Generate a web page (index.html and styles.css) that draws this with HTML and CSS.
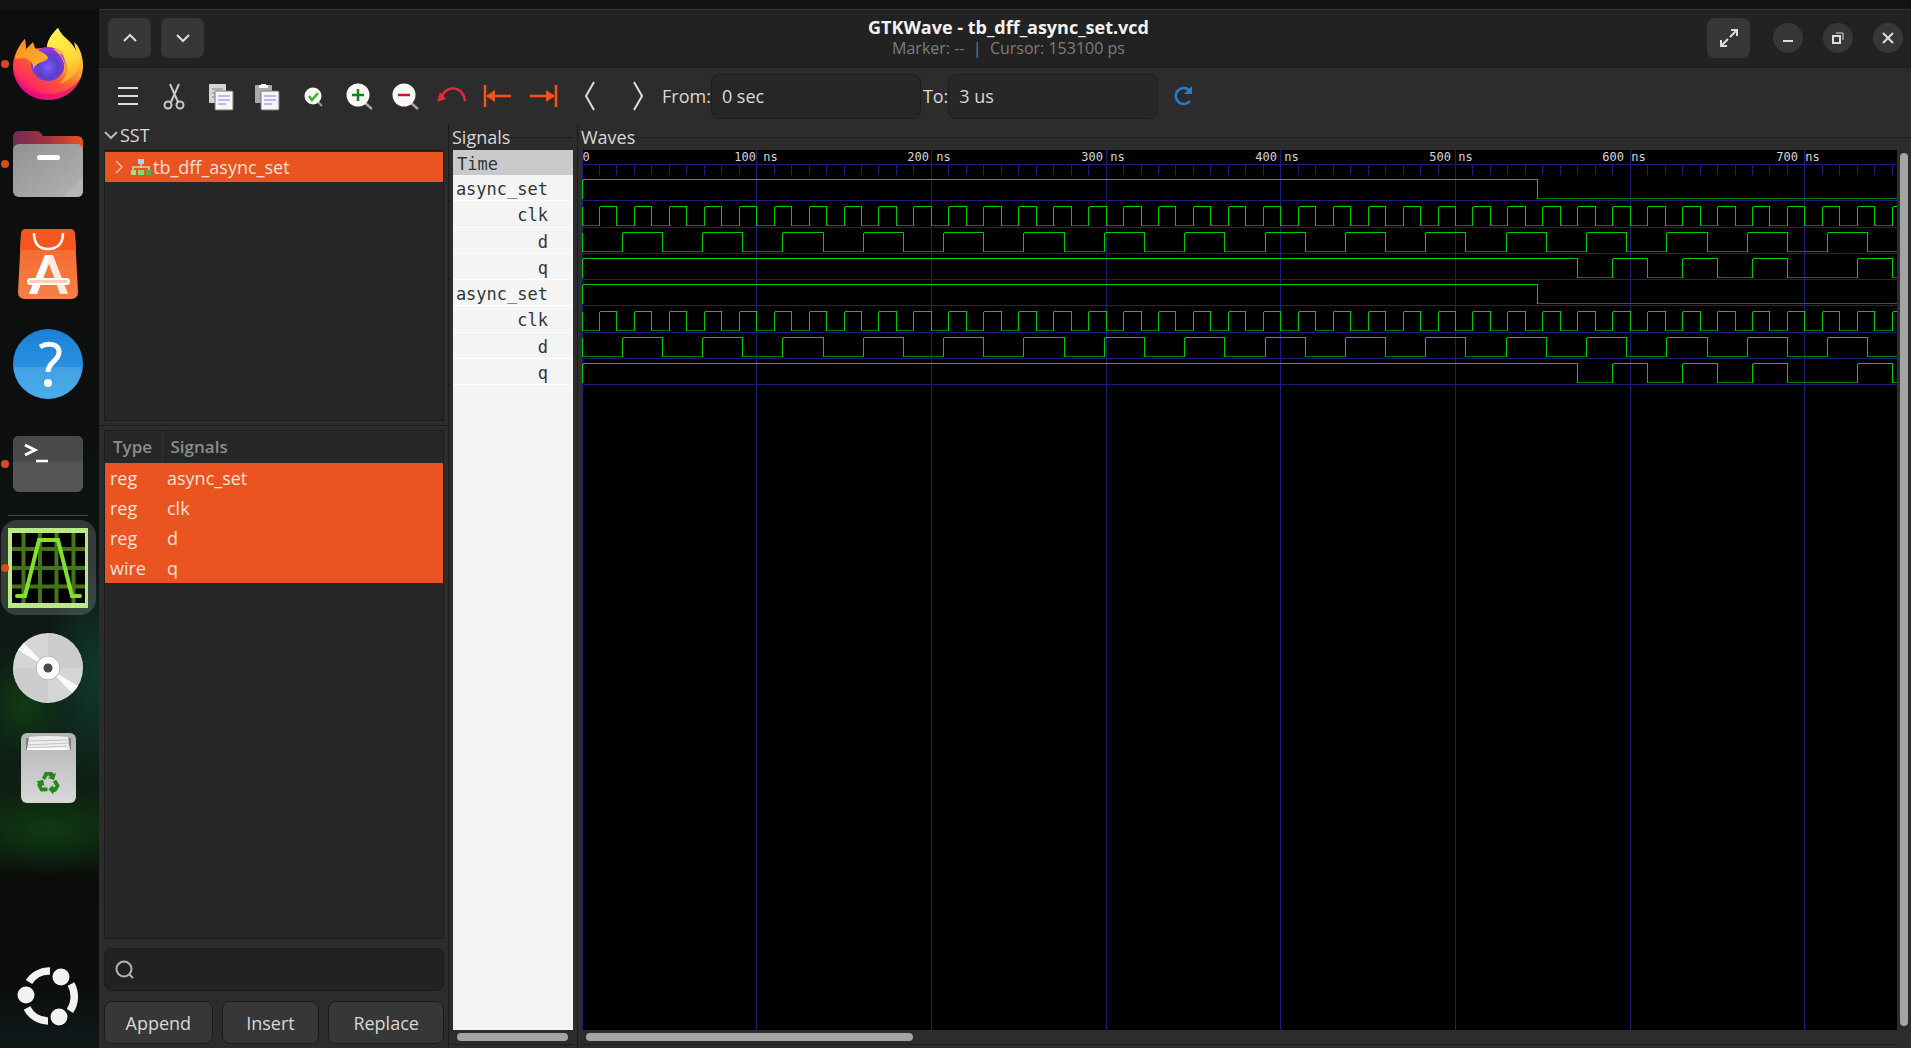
FILE: index.html
```html
<!DOCTYPE html>
<html lang="en">
<head>
<meta charset="utf-8">
<title>GTKWave - tb_dff_async_set.vcd</title>
<link rel="stylesheet" href="styles.css">
</head>
<body>
<div class="topbar"></div>
<div class="desktop">
  <nav class="dock" aria-label="Dock">
    <button class="dock-item running" aria-label="Firefox">
      <svg width="72" height="74" viewBox="0 0 72 74">
        <defs>
          <linearGradient id="fxBody" x1="0.85" y1="0.1" x2="0.25" y2="0.95"><stop offset="0" stop-color="#fff04a"/><stop offset=".3" stop-color="#ffb02c"/><stop offset=".6" stop-color="#ff5a36"/><stop offset=".85" stop-color="#ff2f5b"/><stop offset="1" stop-color="#e5097f"/></linearGradient>
          <linearGradient id="fxFlame" x1=".4" y1="0" x2=".7" y2="1"><stop offset="0" stop-color="#fff44f"/><stop offset=".6" stop-color="#ffd83a"/><stop offset="1" stop-color="#ff9a2a"/></linearGradient>
          <radialGradient id="fxGlobe" cx=".5" cy=".6" r=".6"><stop offset="0" stop-color="#7f5cff"/><stop offset=".5" stop-color="#5a3fc8"/><stop offset="1" stop-color="#a335dc"/></radialGradient>
          <linearGradient id="fxHead" x1="0" y1="0" x2="1" y2="1"><stop offset="0" stop-color="#ff8a1e"/><stop offset="1" stop-color="#ffb52e"/></linearGradient>
        </defs>
        <path d="M46 1C39 8 35 14 35 21L14 22 13 12C6 20 1 29 1 39 1 58 17 73 36 73S71 58 71 39C71 30 68 20 62 15L65 26C61 14 50 11 46 1Z" fill="url(#fxBody)"/>
        <path d="M46 1C39 8 35 14 35 21 43 20 50 24 52 30 58 38 56 50 47 57 60 53 68 44 68 32 67 24 63 20 62 15L65 26C61 14 50 11 46 1Z" fill="url(#fxFlame)"/>
        <circle cx="36" cy="37" r="17" fill="url(#fxGlobe)"/>
        <path d="M41 22C50 22 53 28 53 28L48 27C57 38 53 49 45 54 55 47 56 32 41 22Z" fill="#ffb52e"/>
        <path d="M13 12L14 22 21 15 23 21C29 26 36 27 36 31 35 35 25 34 21 42 22 36 19 34 12 31L3 32C4 24 8 17 13 12Z" fill="url(#fxHead)"/>
        <path d="M1 39C3 57 18 67 36 67 51 67 63 60 69 50 64 64 52 73 36 73 16 73 1 58 1 39Z" fill="#e5097f" opacity=".65"/>
      </svg>
    </button>
    <button class="dock-item running" aria-label="Files">
      <svg width="70" height="66" viewBox="0 0 70 66">
        <defs><linearGradient id="flBack" x1="0" x2="1"><stop offset="0" stop-color="#772953"/><stop offset=".5" stop-color="#a03340"/><stop offset="1" stop-color="#e95420"/></linearGradient>
        <linearGradient id="flFront" x1="0" y1="0" x2="1" y2="1"><stop offset="0" stop-color="#929292"/><stop offset="1" stop-color="#b2b2b2"/></linearGradient></defs>
        <path d="M0 6Q0 0 6 0H24Q27 0 30 5H64Q70 5 70 11V25H0Z" fill="url(#flBack)"/>
        <rect y="13" width="70" height="53" rx="6" fill="url(#flFront)"/>
        <path d="M50 66L70 46V60Q70 66 64 66Z" fill="#bbb" opacity=".6"/>
        <rect x="24" y="24" width="23" height="5" rx="2.5" fill="#fff"/>
      </svg>
    </button>
    <button class="dock-item" aria-label="App Center">
      <svg width="62" height="70" viewBox="0 0 62 70">
        <defs><linearGradient id="acBag" x1="0" y1="0" x2="0" y2="1"><stop offset="0" stop-color="#f4642a"/><stop offset="1" stop-color="#f58046"/></linearGradient></defs>
        <path d="M9 0H53Q58 0 58 6L61 63Q61 70 54 70H8Q1 70 1 63L4 6Q4 0 9 0Z" fill="url(#acBag)"/>
        <path d="M9 0H53Q58 0 58 6L59 21H3L4 6Q4 0 9 0Z" fill="#f3571d"/>
        <path d="M17 4C17 15 22 20 31 20S46 15 46 4" fill="none" stroke="#fff" stroke-width="2.500"/>
        <path d="M28 26H36L51 65H43L32 35 20 65H12Z" fill="#ffe9e0"/><path d="M28 26H33L20 65H12Z" fill="#fff"/>
        <rect x="11" y="50" width="41" height="5" rx="2.500" fill="#ffcdb9" stroke="#fff" stroke-width="2"/>
      </svg>
    </button>
    <button class="dock-item" aria-label="Help">
      <svg width="70" height="70" viewBox="0 0 70 70">
        <defs><linearGradient id="hpTop" x1="0" y1="0" x2="0" y2="1"><stop offset="0" stop-color="#1c7fd8"/><stop offset=".54" stop-color="#2a90de"/><stop offset=".55" stop-color="#41a0e2"/><stop offset="1" stop-color="#4aaeea"/></linearGradient></defs>
        <circle cx="35" cy="35" r="35" fill="url(#hpTop)"/>
        <path d="M27 18C35 13 46 15 46 23 46 32 35 33 35 43" fill="none" stroke="#fff" stroke-width="5"/><circle cx="35" cy="54" r="4" fill="#fff"/>
      </svg>
    </button>
    <button class="dock-item running" aria-label="Terminal">
      <svg width="70" height="56" viewBox="0 0 70 56">
        <rect width="70" height="56" rx="6" fill="#555"/><path d="M0 26V6Q0 0 6 0H64Q70 0 70 6V26Z" fill="#4a4a4a"/>
        <path d="M12 9L22 14 12 19" fill="none" stroke="#fff" stroke-width="3"/><path d="M23 25H35" stroke="#fff" stroke-width="2.500"/>
      </svg>
    </button>
    <hr class="dock-sep">
    <button class="dock-item running active" aria-label="GTKWave">
      <svg width="80" height="80" viewBox="0 0 80 80">
        <rect width="80" height="80" fill="#b9ea86"/><rect x="4" y="5" width="73" height="70" fill="#000"/>
        <path d="M15.500 5V75M32 5V75M48.500 5V75M65.500 5V75M4 21H77M4 40H77M4 58.500H77" stroke="#45731c" stroke-width="4"/>
        <path d="M9 68H17L31 12H50L64 68H72" fill="none" stroke="#84e02f" stroke-width="4" stroke-linecap="round"/>
      </svg>
    </button>
    <button class="dock-item" aria-label="Disc">
      <svg width="70" height="70" viewBox="0 0 70 70">
        <circle cx="35" cy="35" r="35" fill="#d6d6d6"/>
        <path d="M35 35V0A35 35 0 0 1 70 35ZM35 35V70A35 35 0 0 1 0 35Z" fill="#cdcdcd"/>
        <path d="M35 35L5 17 11 10ZM35 35L65 53 59 60Z" fill="#fafafa"/>
        <circle cx="35" cy="35" r="12" fill="#fafafa" stroke="#b9b4a6"/><circle cx="35" cy="35" r="4.500" fill="#4a4a4a"/>
      </svg>
    </button>
    <button class="dock-item" aria-label="Trash">
      <svg width="55" height="70" viewBox="0 0 55 70">
        <defs><linearGradient id="trBox" x1="0" y1="0" x2="0" y2="1"><stop offset="0" stop-color="#b4b4b4"/><stop offset="1" stop-color="#d8d8d8"/></linearGradient></defs>
        <rect width="55" height="70" rx="6" fill="url(#trBox)"/>
        <path d="M5 5H50V17H5Z" fill="#7d7d7d"/><path d="M8 4Q27 2 47 4L49 17H6Z" fill="#eee"/><path d="M8 8L46 7M7 12L48 10M6 15L46 13" stroke="#c4c4c4"/>
        <path d="M6 15H45L46 17H6Z" fill="#fff"/>
        <g fill="#26861d"><path id="recycle" d="M21 45L24 39H31L33 41 35 40 33 47 27 45 29 44 27 42 24 47Z"/><use href="#recycle" transform="rotate(120 27.500 50)"/><use href="#recycle" transform="rotate(240 27.500 50)"/></g>
      </svg>
    </button>
    <button class="dock-item show-apps" aria-label="Show Apps">
      <svg width="62" height="62" viewBox="0 0 62 62">
        <g fill="none" stroke="#f2f2f2" stroke-width="7.500"><path d="M12 17A24 24 0 0 1 33 6"/><path d="M54 19A26 26 0 0 1 53 46"/><path d="M10 43A24 24 0 0 0 31 56"/></g>
        <g fill="#f2f2f2" stroke="#0c0d0d" stroke-width="2"><circle cx="9" cy="30" r="9.500"/><circle cx="44" cy="12" r="9.500"/><circle cx="42" cy="52" r="9.500"/></g>
      </svg>
    </button>
  </nav>

  <main class="window">
    <header class="titlebar">
      <div class="title-side">
        <button class="head-btn" aria-label="Previous"><svg width="16" height="16" viewBox="0 0 16 16"><path d="M2 11L8 5 14 11"/></svg></button>
        <button class="head-btn" aria-label="Next"><svg width="16" height="16" viewBox="0 0 16 16"><path d="M2 5L8 11 14 5"/></svg></button>
      </div>
      <div class="title-text">
        <h1>GTKWave - tb_dff_async_set.vcd</h1>
        <p>Marker: --&nbsp; |&nbsp; Cursor: 153100 ps</p>
      </div>
      <div class="title-side title-right">
        <button class="head-btn" aria-label="Full screen"><svg width="20" height="20" viewBox="0 0 20 20"><path d="M12 2H18V8M18 2L11 9M8 18H2V12M2 18L9 11"/></svg></button>
        <div class="win-ctl">
          <button class="round-btn" aria-label="Minimize"><svg width="14" height="14" viewBox="0 0 14 14"><path d="M2 10H12"/></svg></button>
          <button class="round-btn" aria-label="Restore"><svg width="14" height="14" viewBox="0 0 14 14"><path d="M2 5H9V12H2Z"/><path d="M5 2H12V9" stroke-width="1"/></svg></button>
          <button class="round-btn" aria-label="Close"><svg width="14" height="14" viewBox="0 0 14 14"><path d="M2 2L12 12M12 2L2 12"/></svg></button>
        </div>
      </div>
    </header>

    <div class="toolbar">
      <button class="tool" aria-label="Menu"><svg width="30" height="30" viewBox="0 0 30 30"><path d="M4 7H24M4 15H24M4 23H24" fill="none" stroke="#ddd" stroke-width="2"/></svg></button>
      <button class="tool" aria-label="Cut"><svg width="30" height="30" viewBox="0 0 30 30"><g fill="none" stroke="#c9c9c9" stroke-width="2"><path d="M10 3L18 21M19 3L11 21"/><ellipse cx="8" cy="24" rx="3.500" ry="3.500"/><ellipse cx="20" cy="24" rx="3.500" ry="3.500"/></g></svg></button>
      <button class="tool" aria-label="Copy"><svg width="30" height="30" viewBox="0 0 30 30"><rect x="3" y="3" width="17" height="19" rx="1" fill="#d5d5d5"/><path d="M6 8H17M6 12H10M6 16H10" stroke="#888"/><rect x="9" y="10" width="18" height="19" rx="1" fill="#f6f6f6" stroke="#777"/><path d="M12 15H24M12 19H24M12 23H20" stroke="#a6a6ee" stroke-width="1.500"/></svg></button>
      <button class="tool" aria-label="Paste"><svg width="30" height="30" viewBox="0 0 30 30"><rect x="3" y="4" width="17" height="18" rx="1" fill="#a9a9a9"/><path d="M7 7V4H9V3H14V4H16V7Z" fill="#f3f3f3"/><rect x="9" y="10" width="18" height="19" rx="1" fill="#f6f6f6" stroke="#777"/><path d="M12 15H24M12 19H24M12 23H20" stroke="#a6a6ee" stroke-width="1.500"/></svg></button>
      <button class="tool" aria-label="Zoom to fit"><svg width="30" height="30" viewBox="0 0 30 30"><path d="M20 21L24 25" stroke="#9c9788" stroke-width="2"/><circle cx="15" cy="15" r="8.500" fill="#f7f7f4"/><path d="M11 15L14 19 20 12" fill="none" stroke="#48ae28" stroke-width="2.500"/></svg></button>
      <button class="tool" aria-label="Zoom in"><svg width="30" height="30" viewBox="0 0 30 30"><path d="M21 22L28 28" stroke="#aaa596" stroke-width="2.500"/><circle cx="14" cy="14" r="11.500" fill="#f9f9f7"/><path d="M8 14H20M14 8V20" stroke="#0d8620" stroke-width="2.500"/></svg></button>
      <button class="tool" aria-label="Zoom out"><svg width="30" height="30" viewBox="0 0 30 30"><path d="M21 22L28 28" stroke="#aaa596" stroke-width="2.500"/><circle cx="14" cy="14" r="11.500" fill="#f9f9f7"/><path d="M8 14H20" stroke="#cc1531" stroke-width="2.500"/></svg></button>
      <button class="tool" aria-label="Undo zoom"><svg width="30" height="30" viewBox="0 0 30 30"><path d="M5 18C8 4 27 3 29 20" fill="none" stroke="#e8273f" stroke-width="2.500"/><path d="M1 21L4 11 10 18Z" fill="#e8273f"/></svg></button>
      <button class="tool" aria-label="Go to start"><svg width="30" height="30" viewBox="0 0 30 30"><path d="M3 4V26M5 15H29" stroke="#f9501a" stroke-width="2.500"/><path d="M4 15L13 9V21Z" fill="#f9501a"/></svg></button>
      <button class="tool" aria-label="Go to end"><svg width="30" height="30" viewBox="0 0 30 30"><path d="M28 4V26M2 15H26" stroke="#f9501a" stroke-width="2.500"/><path d="M27 15L18 9V21Z" fill="#f9501a"/></svg></button>
      <button class="tool" aria-label="Previous edge"><svg width="30" height="30" viewBox="0 0 30 30"><path d="M20 1L12 15 20 29" fill="none" stroke="#ddd" stroke-width="2"/></svg></button>
      <button class="tool" aria-label="Next edge"><svg width="30" height="30" viewBox="0 0 30 30"><path d="M14 1L22 15 14 29" fill="none" stroke="#ddd" stroke-width="2"/></svg></button>
      <label class="range">From:<input type="text" value="0 sec"></label>
      <label class="range">To:<input type="text" value="3 us"></label>
      <button class="tool" aria-label="Reload"><svg width="30" height="30" viewBox="0 0 30 30"><path d="M24 20A8 8 0 1 1 23 9" fill="none" stroke="#2080d4" stroke-width="2.500"/><path d="M26 5V13H18Z" fill="#2080d4"/></svg></button>
    </div>

    <div class="panes">
      <section class="sst">
        <button class="expander"><svg width="14" height="14" viewBox="0 0 14 14"><path d="M1 4L7 10 13 4"/></svg>SST</button>
        <div class="tree">
          <div class="tree-row">
            <svg width="10" height="14" viewBox="0 0 10 14"><path d="M2 1L8 7 2 13" fill="none" stroke="#f8b79f" stroke-width="1.500"/></svg>
            <svg width="22" height="18" viewBox="0 0 22 18"><path d="M11 6V10M3 12V9H19V12" fill="none" stroke="#d8d0ae" stroke-width="1.500"/><rect x="8" y="1" width="6" height="5" fill="#a9d2fb"/><rect x="1" y="12" width="5" height="5" fill="#a2dc92"/><rect x="8" y="12" width="6" height="5" fill="#8ed67a"/><rect x="16" y="12" width="5" height="5" fill="#4fb34c"/></svg>
            <span>tb_dff_async_set</span>
          </div>
        </div>
        <div class="split-h"></div>
        <div class="sig-list">
          <table>
            <thead><tr><th class="col-type">Type</th><th>Signals</th></tr></thead>
            <tbody>
              <tr><td>reg</td><td>async_set</td></tr>
              <tr><td>reg</td><td>clk</td></tr>
              <tr><td>reg</td><td>d</td></tr>
              <tr><td>wire</td><td>q</td></tr>
            </tbody>
          </table>
        </div>
        <label class="search"><svg width="20" height="20" viewBox="0 0 20 20"><circle cx="9" cy="9" r="7.500"/><path d="M14 14L18 18"/></svg><input type="search" aria-label="Filter signals"></label>
        <div class="actions"><button>Append</button><button>Insert</button><button>Replace</button></div>
      </section>

      <section class="names">
        <h2 class="frame-title">Signals</h2>
        <div class="names-list">
          <div class="time-head">Time</div>
          <ul>
            <li>async_set</li><li>clk</li><li>d</li><li>q</li>
            <li>async_set</li><li>clk</li><li>d</li><li>q</li>
          </ul>
        </div>
        <div class="hbar"><div class="thumb"></div></div>
      </section>

      <section class="waves">
        <h2 class="frame-title">Waves</h2>
        <div class="canvas-row">
          <svg class="canvas" id="waves" role="img" aria-label="Waveforms"></svg>
          <div class="vbar"><div class="thumb"></div></div>
        </div>
        <div class="hbar"><div class="thumb quarter"></div></div>
      </section>
    </div>
  </main>
</div>
<script src="waves.js"></script>
</body>
</html>
```
FILE: styles.css
```css
* { box-sizing: border-box; }
body {
  margin: 0;
  height: 100vh;
  display: flex;
  flex-direction: column;
  overflow: hidden;
  background: #131313;
  color: #d8d8d8;
  font: 18px/24px "Open Sans", "Noto Sans", sans-serif;
}
button, input { font: inherit; color: inherit; }
button { padding: 0; border: 0; background: none; }
h1, h2, p, ul { margin: 0; padding: 0; }

.topbar { flex: 0 0 9px; }
.desktop { flex: 1; min-height: 0; display: flex; }

/* Dock */
.dock {
  flex: 0 0 99px;
  display: flex;
  flex-direction: column;
  padding: 5px 3px 2px 0;
  background:
    radial-gradient(ellipse 45px 50px at 25% 67%, #103b12, transparent),
    radial-gradient(ellipse 50px 110px at 95% 64%, #10382a, transparent),
    radial-gradient(ellipse 110px 45px at 50% 79%, #0f3a12, transparent),
    linear-gradient(to bottom, #0d0e0e 0, #0d0e0e 38%, #0e1614 56%, #0e2018 68%, #0d1d10 78%, #0b0c0b 84%, #0c0d0d 94%, #0f1a1a 100%);
}
.dock-item {
  flex: 0 0 100px;
  display: flex;
  align-items: center;
  justify-content: center;
  position: relative;
}
.dock-item svg { position: relative; }
.running::after {
  content: "";
  position: absolute;
  left: 1px;
  top: 46px;
  width: 8px;
  height: 8px;
  border-radius: 50%;
  background: #d84a17;
}
.active::before {
  content: "";
  position: absolute;
  inset: 2px 0 3px 1px;
  border-radius: 16px;
  background: rgba(255, 255, 255, .17);
}
.dock-sep { width: 80px; height: 1px; margin: 1px 8px 2px; border: 0; background: #454848; }
.show-apps { margin-top: auto; }

/* Window */
.window { flex: 1; min-width: 0; display: flex; flex-direction: column; background: #2c2c2c; }
.titlebar {
  flex: 0 0 59px;
  display: grid;
  grid-template-columns: 1fr auto 1fr;
  align-items: center;
  padding: 0 8px 2px 9px;
  background: #222;
  border-top: 1px solid #343434;
  border-bottom: 1px solid #1b1b1b;
}
.title-side { display: flex; align-items: center; gap: 10px; }
.title-right { justify-content: flex-end; gap: 23px; }
.win-ctl { display: flex; gap: 20px; }
.title-text { text-align: center; padding: 0 0 2px 6px; }
.title-text h1 { font-size: 18px; line-height: 22px; font-weight: 700; color: #f2f2f2; }
.title-text p { font-size: 16px; line-height: 20px; color: #7c7c7c; }
.head-btn { width: 43px; height: 40px; border-radius: 7px; background: #373737; display: grid; place-items: center; }
.round-btn { width: 30px; height: 30px; border-radius: 50%; background: #373737; display: grid; place-items: center; }
.head-btn svg, .round-btn svg, .expander svg { fill: none; stroke: #dcdcdc; stroke-width: 2; }
.expander svg { stroke: #b8b8b8; }

.toolbar { flex: 0 0 56px; display: flex; align-items: center; padding-left: 7px; }
.tool { width: 46px; height: 46px; display: grid; place-items: center; }
.range { display: flex; align-items: center; padding-left: 4px; }
.range + .range { padding-left: 2px; }
.range input { width: 210px; height: 45px; padding: 0 10px; border: 1px solid #1d1d1d; border-radius: 8px; background: #272727; outline: 0; }

.panes { flex: 1; min-height: 0; display: grid; grid-template-columns: 350px 129px 1fr; }

/* Hierarchy and signal list */
.sst { display: flex; flex-direction: column; min-height: 0; padding: 0 4px 4px 5px; border-right: 1px solid #1b1b1b; }
.expander { display: flex; align-items: center; gap: 2px; height: 22px; margin-bottom: 4px; }
.tree { flex: 270 1 0; border: 1px solid #1c1c1c; background: #272727; }
.tree-row { display: flex; align-items: center; height: 30px; margin-top: 1px; padding-left: 9px; gap: 1px; background: #e95420; color: #fbe0d6; }
.tree-row svg + svg { margin-left: 5px; }
.split-h { height: 1px; margin: 4px -4px 4px -4px; background: #1b1b1b; }
.sig-list { flex: 509 1 0; border: 1px solid #1c1c1c; background: #272727; }
.sig-list table { width: 100%; border-collapse: collapse; }
.sig-list th { height: 32px; padding: 0 8px; text-align: left; font-size: 17px; font-weight: 600; color: #8c8c8c; }
.col-type { width: 57px; border-right: 1px solid #313131; }
.sig-list td { height: 30px; padding: 0 5px; background: #e95420; color: #fbe0d6; }
.search { display: flex; align-items: center; flex: 0 0 43px; margin: 9px 0 10px; padding: 0 10px; gap: 8px; border: 1px solid #1b1b1b; border-radius: 8px; background: #222; }
.search svg { fill: none; stroke: #b4b4b4; stroke-width: 2; }
.search input { flex: 1; min-width: 0; border: 0; background: none; outline: 0; }
.actions { display: grid; grid-template-columns: 108fr 97fr 115fr; gap: 9px; }
.actions button { height: 43px; border: 1px solid #1c1c1c; border-radius: 8px; background: #373737; }

/* Frames */
.frame-title { display: flex; align-items: center; height: 26px; font-size: 18px; font-weight: 400; line-height: 24px; }
.frame-title::after { content: ""; flex: 1; height: 1px; background: #1e1e1e; }
.names { display: flex; flex-direction: column; min-height: 0; padding: 0 4px 3px 3px; border-right: 1px solid #1b1b1b; }
.names-list { flex: 1; min-height: 0; margin-left: 1px; background: #f4f4f4; color: #30363a; font: 17px/22px "DejaVu Sans Mono", "Liberation Mono", monospace; }
.time-head { height: 25px; padding: 3px 0 0 4px; background: #cacaca; }
.names-list ul { display: grid; grid-template-rows: repeat(8, minmax(0, 1fr)); height: 210px; list-style: none; }
.names-list li { padding: 3px 25px 0 0; border-bottom: 1px solid #fff; text-align: right; white-space: nowrap; }
.waves { display: flex; flex-direction: column; min-width: 0; min-height: 0; padding: 0 0 3px 3px; }
.canvas-row { flex: 1; min-height: 0; display: flex; margin-left: 1px; }
.canvas { display: block; flex: 1; min-width: 0; height: 100%; background: #000; }
.vbar { flex: 0 0 14px; padding: 3px 3px 4px; display: flex; }
.vbar .thumb { width: 8px; height: 100%; }
.hbar { flex: 0 0 15px; padding: 3px 5px; border-bottom: 1px solid #1c1c1c; }
.waves .hbar { margin-right: 14px; }
.thumb { height: 8px; border-radius: 4px; background: #a4a4a4; }
.quarter { width: 25%; }

/* Waveform drawing */
.grid { stroke: #1d1d7c; fill: none; shape-rendering: crispEdges; }
.lo { stroke: #007c00; fill: none; shape-rendering: crispEdges; }
.hi { stroke: #00cc00; fill: none; shape-rendering: crispEdges; }
.tick-label { fill: #d6d6d6; font: 12px "DejaVu Sans Mono", monospace; text-anchor: middle; }
```
FILE: waves.js
```js
// Draws the time ruler and the signal traces. Times are in nanoseconds.
const NS = "http://www.w3.org/2000/svg";
const view = document.getElementById("waves");
const PX_PER_NS = 1.747, END = 3000, HEAD = 25, ROW = 26.25;
const x = t => Math.floor(t * PX_PER_NS) + 0.5;

function add(tag, attrs, text) {
  const el = document.createElementNS(NS, tag);
  for (const k in attrs) el.setAttribute(k, attrs[k]);
  if (text) el.textContent = text;
  view.appendChild(el);
}

const toggles = step => Array.from({ length: Math.ceil(END / step) - 1 }, (_, i) => (i + 1) * step);
const module = [
  { start: 1, edges: [547] },
  { start: 0, edges: toggles(10) },
  { start: 0, edges: toggles(23) },
  { start: 1, edges: [570, 590, 610, 630, 650, 670, 690, 730, 750] }
];
const signals = module.concat(module);

function draw() {
  view.replaceChildren();
  const width = view.clientWidth;
  const height = view.clientHeight;
  let grid = `M0 14.5H${width}`;
  for (let t = 0; t < END; t += 10) {
    grid += t % 100 === 0 ? `M${x(t)} 0V${height}` : `M${x(t)} 15V25`;
  }
  signals.forEach((s, i) => { grid += `M0 ${Math.round(HEAD + (i + 1) * ROW) - 0.5}H${width}`; });
  add("path", { class: "grid", d: grid });

  signals.forEach((s, i) => {
    const base = Math.round(HEAD + (i + 1) * ROW) - 0.5;
    const hiY = base - 21, loY = base - 2;
    let level = s.start, from = 0, hi = `M0.5 ${hiY}V${loY}`, lo = "M0 0";
    for (const t of [...s.edges, END]) {
      const seg = `M${x(from)} ${level ? hiY : loY}H${x(t)}`;
      if (level) hi += seg; else lo += seg;
      if (t < END) hi += `M${x(t)} ${hiY}V${loY}`;
      level = 1 - level;
      from = t;
    }
    add("path", { class: "lo", d: lo });
    add("path", { class: "hi", d: hi });
  });

  add("text", { class: "tick-label", x: 4, y: 11 }, "0");
  for (let k = 1; k * 174 + 24 < width; k++) {
    add("text", { class: "tick-label", x: Math.round(k * 173.7), y: 11 }, `${k * 100} ns`);
  }
}

draw();
window.addEventListener("resize", draw);
```
